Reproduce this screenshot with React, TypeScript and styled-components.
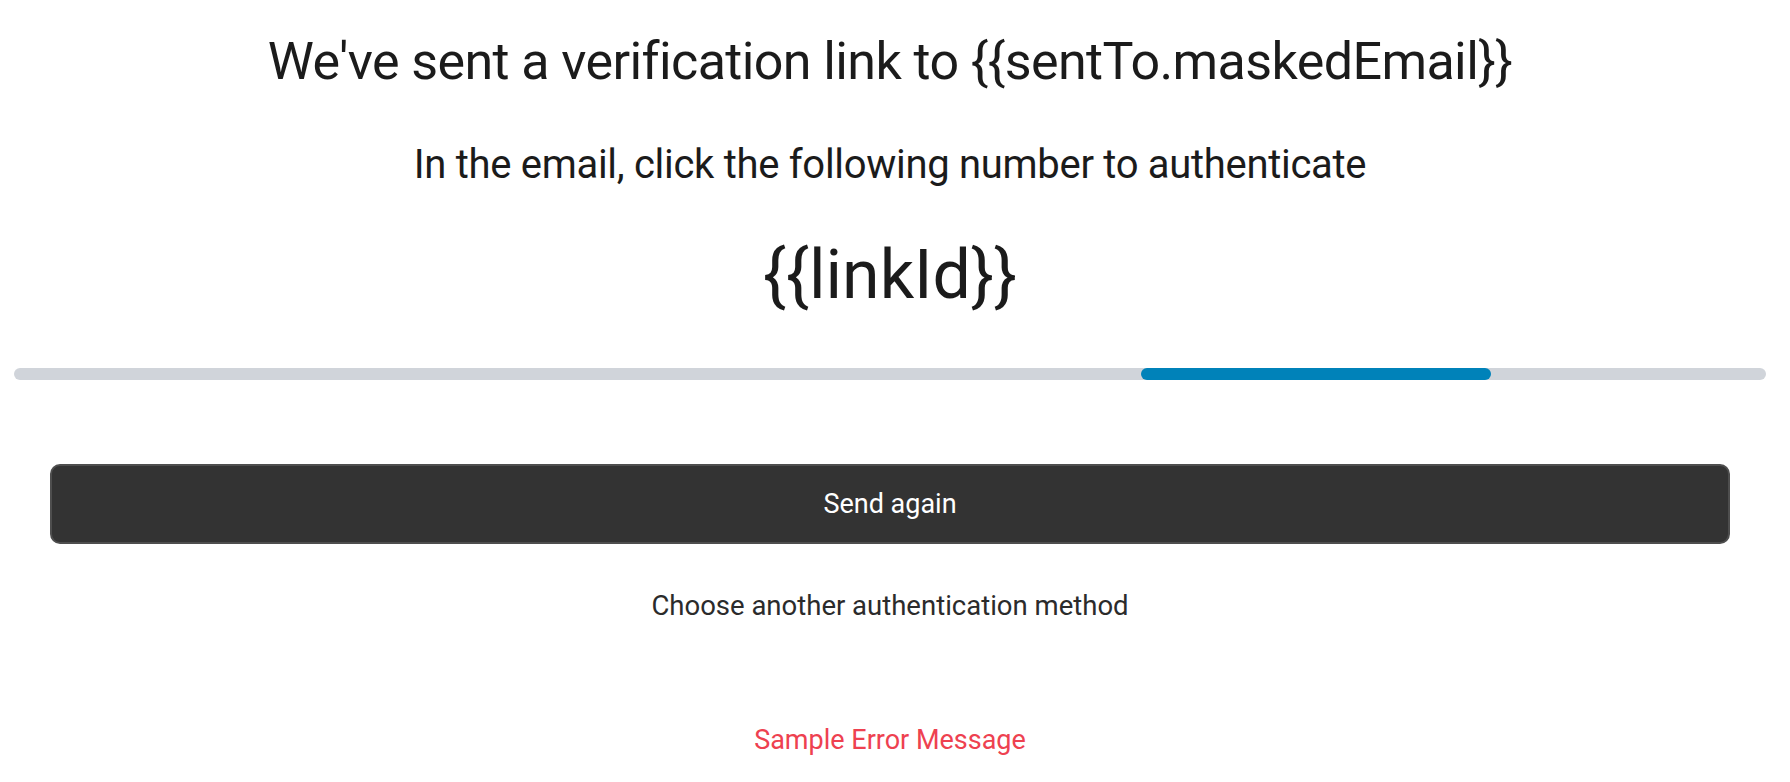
import React from "react";
import styled, { createGlobalStyle } from "styled-components";

const GlobalStyle = createGlobalStyle`
    body {
        margin: 0;
        background: #ffffff;
        font-family: Roboto, "Liberation Sans", sans-serif;
        color: #1b1b1b;
    }
`;

const Page = styled.main`
    width: 1780px;
    display: flex;
    flex-direction: column;
    align-items: center;
    padding-top: 31px;
`;

const Title = styled.h1`
    margin: 0;
    font-size: 52px;
    line-height: 62px;
    font-weight: 400;
    letter-spacing: -0.6px;
`;

const Subtitle = styled.p`
    margin: 48px 0 0;
    font-size: 40px;
    line-height: 48px;
    font-weight: 400;
    letter-spacing: -0.3px;
`;

const LinkId = styled.div`
    margin-top: 46px;
    font-size: 68px;
    line-height: 80px;
`;

const Track = styled.div`
    align-self: stretch;
    margin: 53px 14px 0;
    height: 12px;
    border-radius: 6px;
    background: #d0d4da;
    display: flex;
`;

const Bar = styled.div<{ $start: number; $width: number }>`
    margin-left: ${(p) => p.$start}%;
    width: ${(p) => p.$width}%;
    height: 100%;
    border-radius: 6px;
    background: #0082b9;
`;

const PrimaryButton = styled.button`
    align-self: stretch;
    margin: 84px 50px 0;
    height: 80px;
    border: 2px solid #4e4e4e;
    border-radius: 10px;
    background: #333333;
    color: #ffffff;
    font-family: inherit;
    font-size: 27px;
    cursor: pointer;
`;

const TextLink = styled.button`
    margin-top: 45px;
    border: none;
    background: none;
    padding: 0;
    color: #2b2b2b;
    font-family: inherit;
    font-size: 27.5px;
    line-height: 34px;
    cursor: pointer;
`;

const ErrorText = styled.p`
    margin: 100px 0 0;
    color: #ee4150;
    font-size: 27px;
    line-height: 34px;
`;

export default function App() {
    // track spans 1752px; indicator sits at 1141..1491
    const start = ((1141 - 14) / 1752) * 100;
    const width = (350 / 1752) * 100;
    return (
        <>
            <GlobalStyle />
            <Page>
                <Title>We've sent a verification link to {"{{sentTo.maskedEmail}}"}</Title>
                <Subtitle>In the email, click the following number to authenticate</Subtitle>
                <LinkId>{"{{linkId}}"}</LinkId>
                <Track>
                    <Bar $start={start} $width={width} />
                </Track>
                <PrimaryButton type="button">Send again</PrimaryButton>
                <TextLink type="button">Choose another authentication method</TextLink>
                <ErrorText>Sample Error Message</ErrorText>
            </Page>
        </>
    );
}
